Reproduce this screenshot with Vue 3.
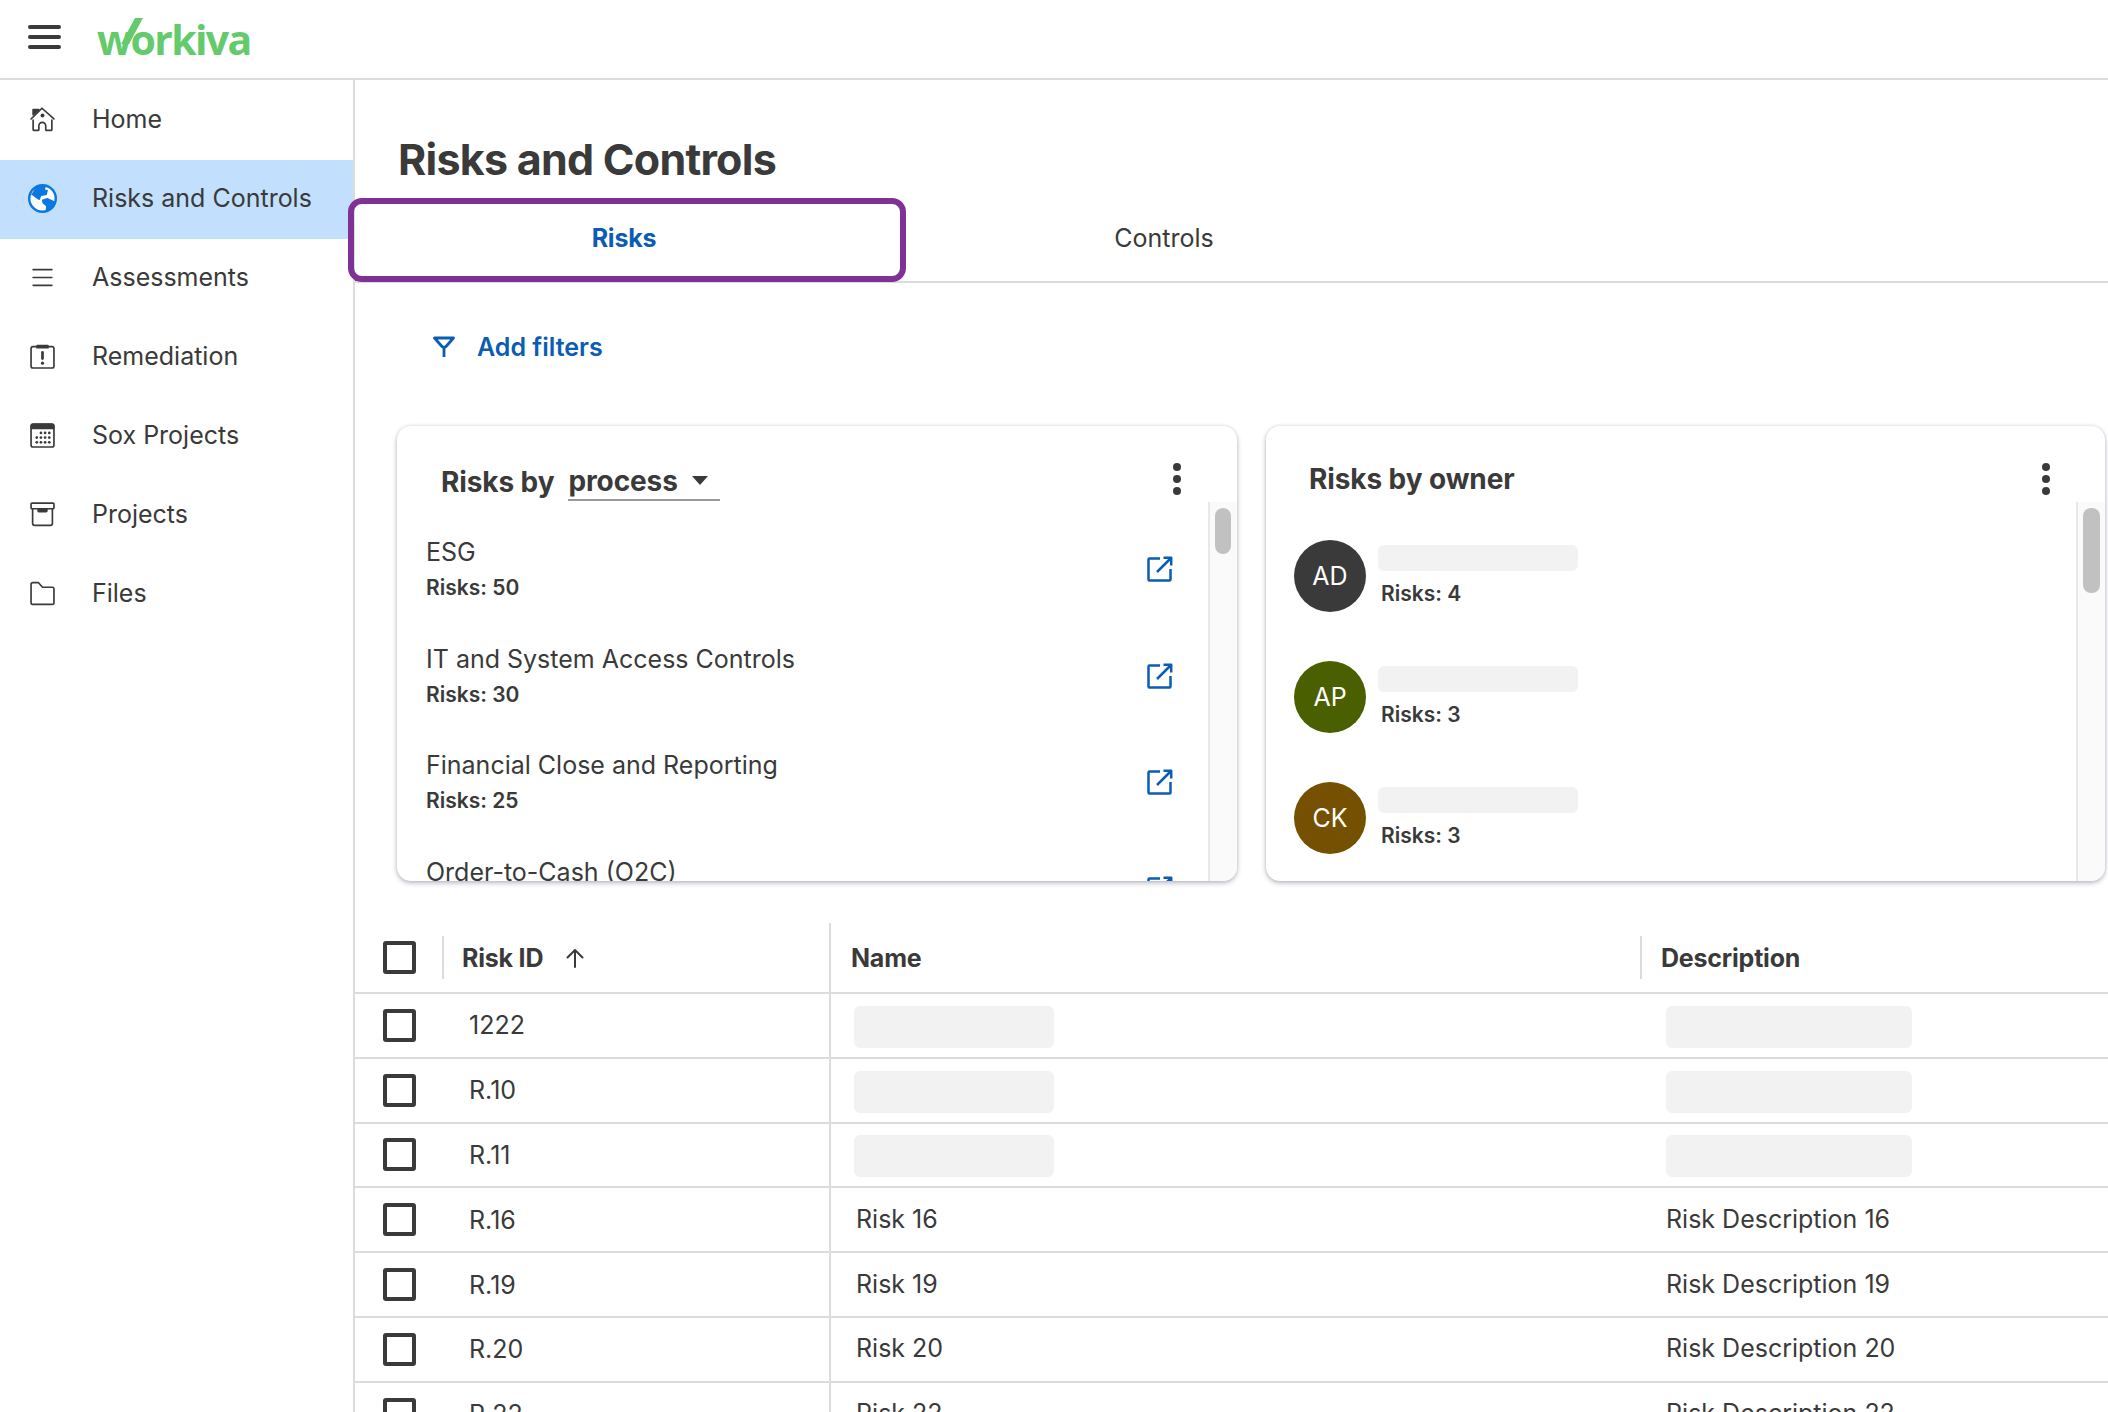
<template>
  <div class="app">
    <header class="topbar">
      <button type="button" class="hamburger" aria-label="Menu"><span></span><span></span><span></span></button>
      <div class="logo"><span class="logo-tail"></span>workiva</div>
    </header>

    <div class="body">
      <nav class="sidebar">
        <a v-for="item in navItems" :key="item.label" class="nav-item" :class="{ 'nav-item--active': item.active }">
          <svg class="nav-icon" :class="{ 'nav-icon--globe': item.icon === 'globe' }" viewBox="0 0 24 24" fill="none" stroke="#3a3a3a" stroke-width="1.6" stroke-linecap="round" stroke-linejoin="round">
            <template v-if="item.icon === 'home'">
              <path d="M1 11.500 11.500 1.200 23 11.500" />
              <path d="M3 7.500 8.500 2.500H3z" fill="#3a3a3a" />
              <circle cx="12" cy="8.200" r="1.900" fill="#3a3a3a" stroke="none" />
              <path d="M3 12.500v9a1 1 0 0 0 1 1h3.500a1 1 0 0 0 1-1v-3.500a3.300 3.300 0 0 1 6.600 0v3.500a1 1 0 0 0 1 1H20a1 1 0 0 0 1-1v-9" />
            </template>
            <template v-else-if="item.icon === 'globe'">
              <circle cx="12" cy="12" r="11" fill="#fff" stroke="#0a78e0" stroke-width="2" />
              <path d="M2.500 9 6 3.500C10 .5 13 .5 15 1.500L14 4.500 16.500 5 15.500 9 11 10 9.500 13.500 6.500 11.500 4 9.500z" fill="#0a78e0" stroke="none" />
              <path d="M11.500 13 16 11.500 22.500 14.500C21.500 18 18.500 21.500 14.500 22.500L15 18.500 12 16z" fill="#0a78e0" stroke="none" />
            </template>
            <template v-else-if="item.icon === 'lines'">
              <path d="M3 4.500h18M3 12h18M3 19.500h18" />
            </template>
            <template v-else-if="item.icon === 'clipboard'">
              <rect x="1" y="2.500" width="22" height="20.500" rx="2" />
              <path d="M7 .8h10a1 1 0 0 1 1 1v2.600H6V1.800a1 1 0 0 1 1-1z" fill="#3a3a3a" stroke="none" />
              <path d="M12 8v6" stroke-width="2.600" />
              <circle cx="12" cy="18.400" r="1.500" fill="#3a3a3a" stroke="none" />
            </template>
            <template v-else-if="item.icon === 'calendar'">
              <rect x="1" y="1" width="22" height="22" rx="2" />
              <path d="M3 .5h18a2.400 2.400 0 0 1 2.400 2.400V6H.6V2.900A2.400 2.400 0 0 1 3 .5z" fill="#3a3a3a" stroke="none" />
              <g fill="#3a3a3a" stroke="none">
                <circle v-for="d in calendarDots" :key="d.x + '-' + d.y" :cx="d.x" :cy="d.y" r="1.300" />
              </g>
            </template>
            <template v-else-if="item.icon === 'archive'">
              <rect x="1" y="1" width="22" height="5.500" rx="1" />
              <path d="M2.500 6.500v14a2 2 0 0 0 2 2h15a2 2 0 0 0 2-2v-14" />
              <path d="M7 6.500h10v2a1.500 1.500 0 0 1-1.500 1.500h-7A1.500 1.500 0 0 1 7 8.500z" fill="#3a3a3a" stroke="none" />
            </template>
            <template v-else>
              <path d="M1 3a1.500 1.500 0 0 1 1.500-1.500H8l4 4.500h9.500A1.500 1.500 0 0 1 23 7.500V21a1.500 1.500 0 0 1-1.500 1.500h-19A1.500 1.500 0 0 1 1 21z" />
            </template>
          </svg>
          <span>{{ item.label }}</span>
        </a>
      </nav>

      <main class="main">
        <h1 class="page-title">Risks and Controls</h1>

        <div class="tabs">
          <div class="tab tab--active">Risks</div>
          <div class="tab">Controls</div>
        </div>

        <div class="filters">
          <svg class="filter-icon" viewBox="0 0 22 22" fill="none" stroke="#0b5cb5" stroke-width="2.800" stroke-linejoin="round">
            <path d="M1.500 2h19L13 10.500l-2 1-2-1z" />
            <path d="M11 11v10" />
          </svg>
          <span>Add filters</span>
        </div>

        <div class="cards">
          <section class="card">
            <div class="card-head">
              <h2 class="card-title card-title--process">Risks by</h2>
              <div class="select"><span>process</span><i class="caret"></i></div>
              <div class="dots dots--process"><i></i><i></i><i></i></div>
            </div>
            <div class="card-body">
              <div class="list list--process">
                <div v-for="p in processes" :key="p.name" class="process-item">
                  <div>
                    <div class="process-name">{{ p.name }}</div>
                    <div class="count">Risks: {{ p.risks }}</div>
                  </div>
                  <svg class="open-icon" viewBox="0 0 26 26" fill="none" stroke="#0b5cb5" stroke-width="2.500" stroke-linejoin="round">
                    <path d="M13 2.500H2.500a1 1 0 0 0-1 1V23.500a1 1 0 0 0 1 1h20a1 1 0 0 0 1-1V13" />
                    <path d="M10 16 23.500 2.500M16.500 1.800h7.700v7.700" />
                  </svg>
                </div>
              </div>
              <div class="scroll-track"><div class="scroll-thumb"></div></div>
            </div>
          </section>

          <section class="card card--owner">
            <div class="card-head">
              <h2 class="card-title card-title--owner">Risks by owner</h2>
              <div class="dots dots--owner"><i></i><i></i><i></i></div>
            </div>
            <div class="card-body">
              <div class="list list--owner">
                <div v-for="o in owners" :key="o.initials" class="owner-item">
                  <div class="avatar" :style="{ background: o.color }">{{ o.initials }}</div>
                  <div class="owner-text">
                    <div class="skeleton skeleton--owner"></div>
                    <div class="count count--owner">Risks: {{ o.risks }}</div>
                  </div>
                </div>
              </div>
              <div class="scroll-track scroll-track--owner"><div class="scroll-thumb scroll-thumb--owner"></div></div>
            </div>
          </section>
        </div>

        <div class="table">
          <div class="row row--head">
            <div class="cell cell--id">
              <span class="check"></span>
              <span class="head-sep"></span>
              <span class="head-label">Risk ID</span>
              <svg class="sort-icon" viewBox="0 0 20 20" fill="none" stroke="#3a3a3a" stroke-width="2" stroke-linecap="round" stroke-linejoin="round">
                <path d="M10 19V2M2.500 9.500 10 2l7.500 7.500" />
              </svg>
            </div>
            <div class="cell cell--name"><span class="head-label">Name</span></div>
            <div class="cell cell--desc"><span class="head-sep head-sep--desc"></span><span class="head-label">Description</span></div>
          </div>

          <div v-for="r in rows" :key="r.id" class="row">
            <div class="cell cell--id">
              <span class="check"></span>
              <span class="row-id">{{ r.id }}</span>
            </div>
            <div class="cell cell--name">
              <div v-if="r.loading" class="skeleton skeleton--name"></div>
              <span v-else class="row-text">{{ r.name }}</span>
            </div>
            <div class="cell cell--desc">
              <div v-if="r.loading" class="skeleton skeleton--desc"></div>
              <span v-else class="row-text row-text--desc">{{ r.description }}</span>
            </div>
          </div>
        </div>
      </main>
    </div>
  </div>
</template>

<script setup>
const navItems = [
  { label: 'Home', icon: 'home' },
  { label: 'Risks and Controls', icon: 'globe', active: true },
  { label: 'Assessments', icon: 'lines' },
  { label: 'Remediation', icon: 'clipboard' },
  { label: 'Sox Projects', icon: 'calendar' },
  { label: 'Projects', icon: 'archive' },
  { label: 'Files', icon: 'folder' }
];

const calendarDots = [
  { x: 10.500, y: 9.500 }, { x: 14.500, y: 9.500 }, { x: 18.500, y: 9.500 },
  { x: 6.500, y: 14 }, { x: 10.500, y: 14 }, { x: 14.500, y: 14 }, { x: 18.500, y: 14 },
  { x: 6.500, y: 18.500 }, { x: 10.500, y: 18.500 }, { x: 14.500, y: 18.500 }, { x: 18.500, y: 18.500 }
];

const processes = [
  { name: 'ESG', risks: 50 },
  { name: 'IT and System Access Controls', risks: 30 },
  { name: 'Financial Close and Reporting', risks: 25 },
  { name: 'Order-to-Cash (O2C)', risks: 20 }
];

const owners = [
  { initials: 'AD', risks: 4, color: '#3a3a3a' },
  { initials: 'AP', risks: 3, color: '#4a5f00' },
  { initials: 'CK', risks: 3, color: '#755000' }
];

const rows = [
  { id: '1222', loading: true },
  { id: 'R.10', loading: true },
  { id: 'R.11', loading: true },
  { id: 'R.16', name: 'Risk 16', description: 'Risk Description 16' },
  { id: 'R.19', name: 'Risk 19', description: 'Risk Description 19' },
  { id: 'R.20', name: 'Risk 20', description: 'Risk Description 20' },
  { id: 'R.22', name: 'Risk 22', description: 'Risk Description 22' }
];
</script>

<style>
html, body { margin: 0; background: #fff; overflow: hidden; }
</style>

<style scoped>
.app { width: 2108px; height: 1412px; overflow: hidden; font-family: Inter, "Noto Sans", sans-serif; color: #3a3a3a; background: #fff; }

.topbar { height: 80px; box-sizing: border-box; border-bottom: 2px solid #dcdcdc; display: flex; align-items: flex-start; }
.hamburger { width: 33px; margin: 25px 0 0 28px; padding: 0; border: none; background: none; display: flex; flex-direction: column; gap: 6.500px; }
.hamburger span { display: block; height: 3.500px; border-radius: 2px; background: #3a3a3a; }
.logo { position: relative; margin: 11px 0 0 36px; font-family: "Open Sans", sans-serif; font-weight: 700; font-size: 41px; line-height: 56px; letter-spacing: -1.650px; color: #63cb6b; }
.logo-tail { position: absolute; left: 31px; top: 7px; width: 8px; height: 26px; background: #63cb6b; transform: skewX(-28deg); }

.body { display: flex; height: 1332px; }
.sidebar { width: 355px; flex: none; box-sizing: border-box; border-right: 2px solid #dcdcdc; padding-top: 1px; }
.nav-item { display: flex; align-items: center; height: 79px; box-sizing: border-box; padding: 0 0 3px 30px; gap: 37px; font-size: 25px; }
.nav-item--active { background: #c2e0fd; }
.nav-icon { width: 25px; height: 25px; flex: none; overflow: visible; }
.nav-icon--globe { width: 29px; height: 29px; margin: 0 -2px; }

.main { flex: 1; min-width: 0; }
.page-title { margin: 0; padding: 53px 0 0 43px; height: 118px; box-sizing: border-box; font-size: 43px; line-height: 52px; font-weight: 700; letter-spacing: -.75px; }

.tabs { display: flex; height: 85px; box-sizing: border-box; border-bottom: 2px solid #dcdcdc; }
.tab { width: 542px; display: flex; align-items: center; justify-content: center; font-size: 25px; padding-bottom: 3px; box-sizing: border-box; height: 83px; position: relative; }
.tab--active { width: 538px; padding-bottom: 0; color: #0b5cb5; font-weight: 700; letter-spacing: -.2px; border-bottom: 4px solid #0b5cb5; }
.tab--active::after { content: ""; position: absolute; left: -7px; right: -13px; top: 0; bottom: -5px; border: 6px solid #7f3296; border-radius: 14px; }

.filters { display: flex; align-items: center; gap: 22px; height: 22px; margin: 53px 0 0 78px; font-size: 25px; font-weight: 600; color: #0b5cb5; }
.filter-icon { width: 22px; height: 22px; flex: none; }

.cards { display: flex; gap: 28px; margin: 68px 0 0 42px; }
.card { width: 840px; height: 455px; flex: none; border-radius: 14px; box-shadow: 0 2px 5px rgba(60, 60, 90, .35), 0 0 3px rgba(60, 60, 90, .12); overflow: hidden; display: flex; flex-direction: column; background: #fff; }
.card--owner { width: 839px; margin-left: 1px; }
.card-head { height: 76px; flex: none; display: flex; align-items: flex-start; position: relative; }
.card-title { margin: 0; font-size: 28px; font-weight: 700; line-height: 36px; letter-spacing: -.1px; }
.card-title--process { margin: 38px 0 0 44px; }
.card-title--owner { margin: 35px 0 0 43px; }
.select { display: flex; align-items: center; box-sizing: border-box; width: 152px; height: 48px; margin: 27px 0 0 14px; border-bottom: 2px solid #999; font-size: 28px; font-weight: 700; line-height: 36px; letter-spacing: -.1px; padding-top: 9px; }
.caret { width: 0; height: 0; margin-left: 14px; border-left: 8px solid transparent; border-right: 8px solid transparent; border-top: 9px solid #3a3a3a; }
.dots { position: absolute; top: 37px; display: flex; flex-direction: column; gap: 4px; }
.dots i { width: 8px; height: 8px; border-radius: 50%; background: #3a3a3a; }
.dots--process { left: 776px; }
.dots--owner { left: 776px; }

.card-body { flex: 1; min-height: 0; display: flex; }
.list { flex: 1; min-width: 0; overflow: hidden; }
.list--process { padding: 31px 35px 0 29px; }
.process-item { display: flex; align-items: center; justify-content: space-between; height: 72px; margin-bottom: 34.500px; flex: none; }
.process-name { font-size: 25px; line-height: 38px; }
.count { font-size: 21px; line-height: 34px; font-weight: 600; }
.open-icon { width: 26px; height: 26px; flex: none; }
.scroll-track { width: 29px; flex: none; box-sizing: border-box; border-left: 2px solid #e8e8e8; background: #fafafa; padding: 6px 6px 0 5px; }
.scroll-thumb { height: 46px; border-radius: 8px; background: #c1c1c1; }
.scroll-track--owner { padding-right: 5px; }
.scroll-thumb--owner { height: 85px; }

.list--owner { padding: 38px 0 0 28px; }
.owner-item { display: flex; gap: 12px; height: 72px; margin-bottom: 49px; }
.avatar { width: 72px; height: 72px; flex: none; border-radius: 50%; color: #fff; font-size: 25px; display: flex; align-items: center; justify-content: center; }
.owner-text { padding-top: 5px; }
.skeleton { background: #f2f2f2; border-radius: 6px; }
.skeleton--owner { width: 200px; height: 26px; }
.count--owner { margin: 8px 0 0 3px; line-height: 30px; }

.table { margin-top: 42px; }
.row { display: grid; grid-template-columns: 476px 809px 1fr; height: 64.800px; box-sizing: border-box; border-bottom: 2px solid #dcdcdc; }
.row--head { height: 71px; }
.cell { display: flex; align-items: center; min-width: 0; }
.cell--id { border-right: 2px solid #dcdcdc; padding-left: 28px; }
.cell--name { padding-left: 20px; }
.check { width: 33px; height: 33px; flex: none; box-sizing: border-box; border: 4px solid #3a3a3a; border-radius: 3px; }
.head-sep { width: 2px; height: 43px; margin: 0 18px 0 26px; background: #dcdcdc; flex: none; }
.head-sep--desc { margin: 0 19px 0 0; }
.head-label { font-size: 25px; font-weight: 700; letter-spacing: -.2px; }
.sort-icon { width: 20px; height: 20px; margin-left: 22px; flex: none; }
.row-id { margin-left: 53px; font-size: 25px; }
.row-text { margin: 0 0 2px 5px; font-size: 25px; }
.row-text--desc { margin-left: 26px; }
.skeleton--name { width: 200px; height: 42px; margin: 3px 0 0 3px; }
.skeleton--desc { width: 246px; height: 42px; margin: 3px 0 0 26px; }
</style>
